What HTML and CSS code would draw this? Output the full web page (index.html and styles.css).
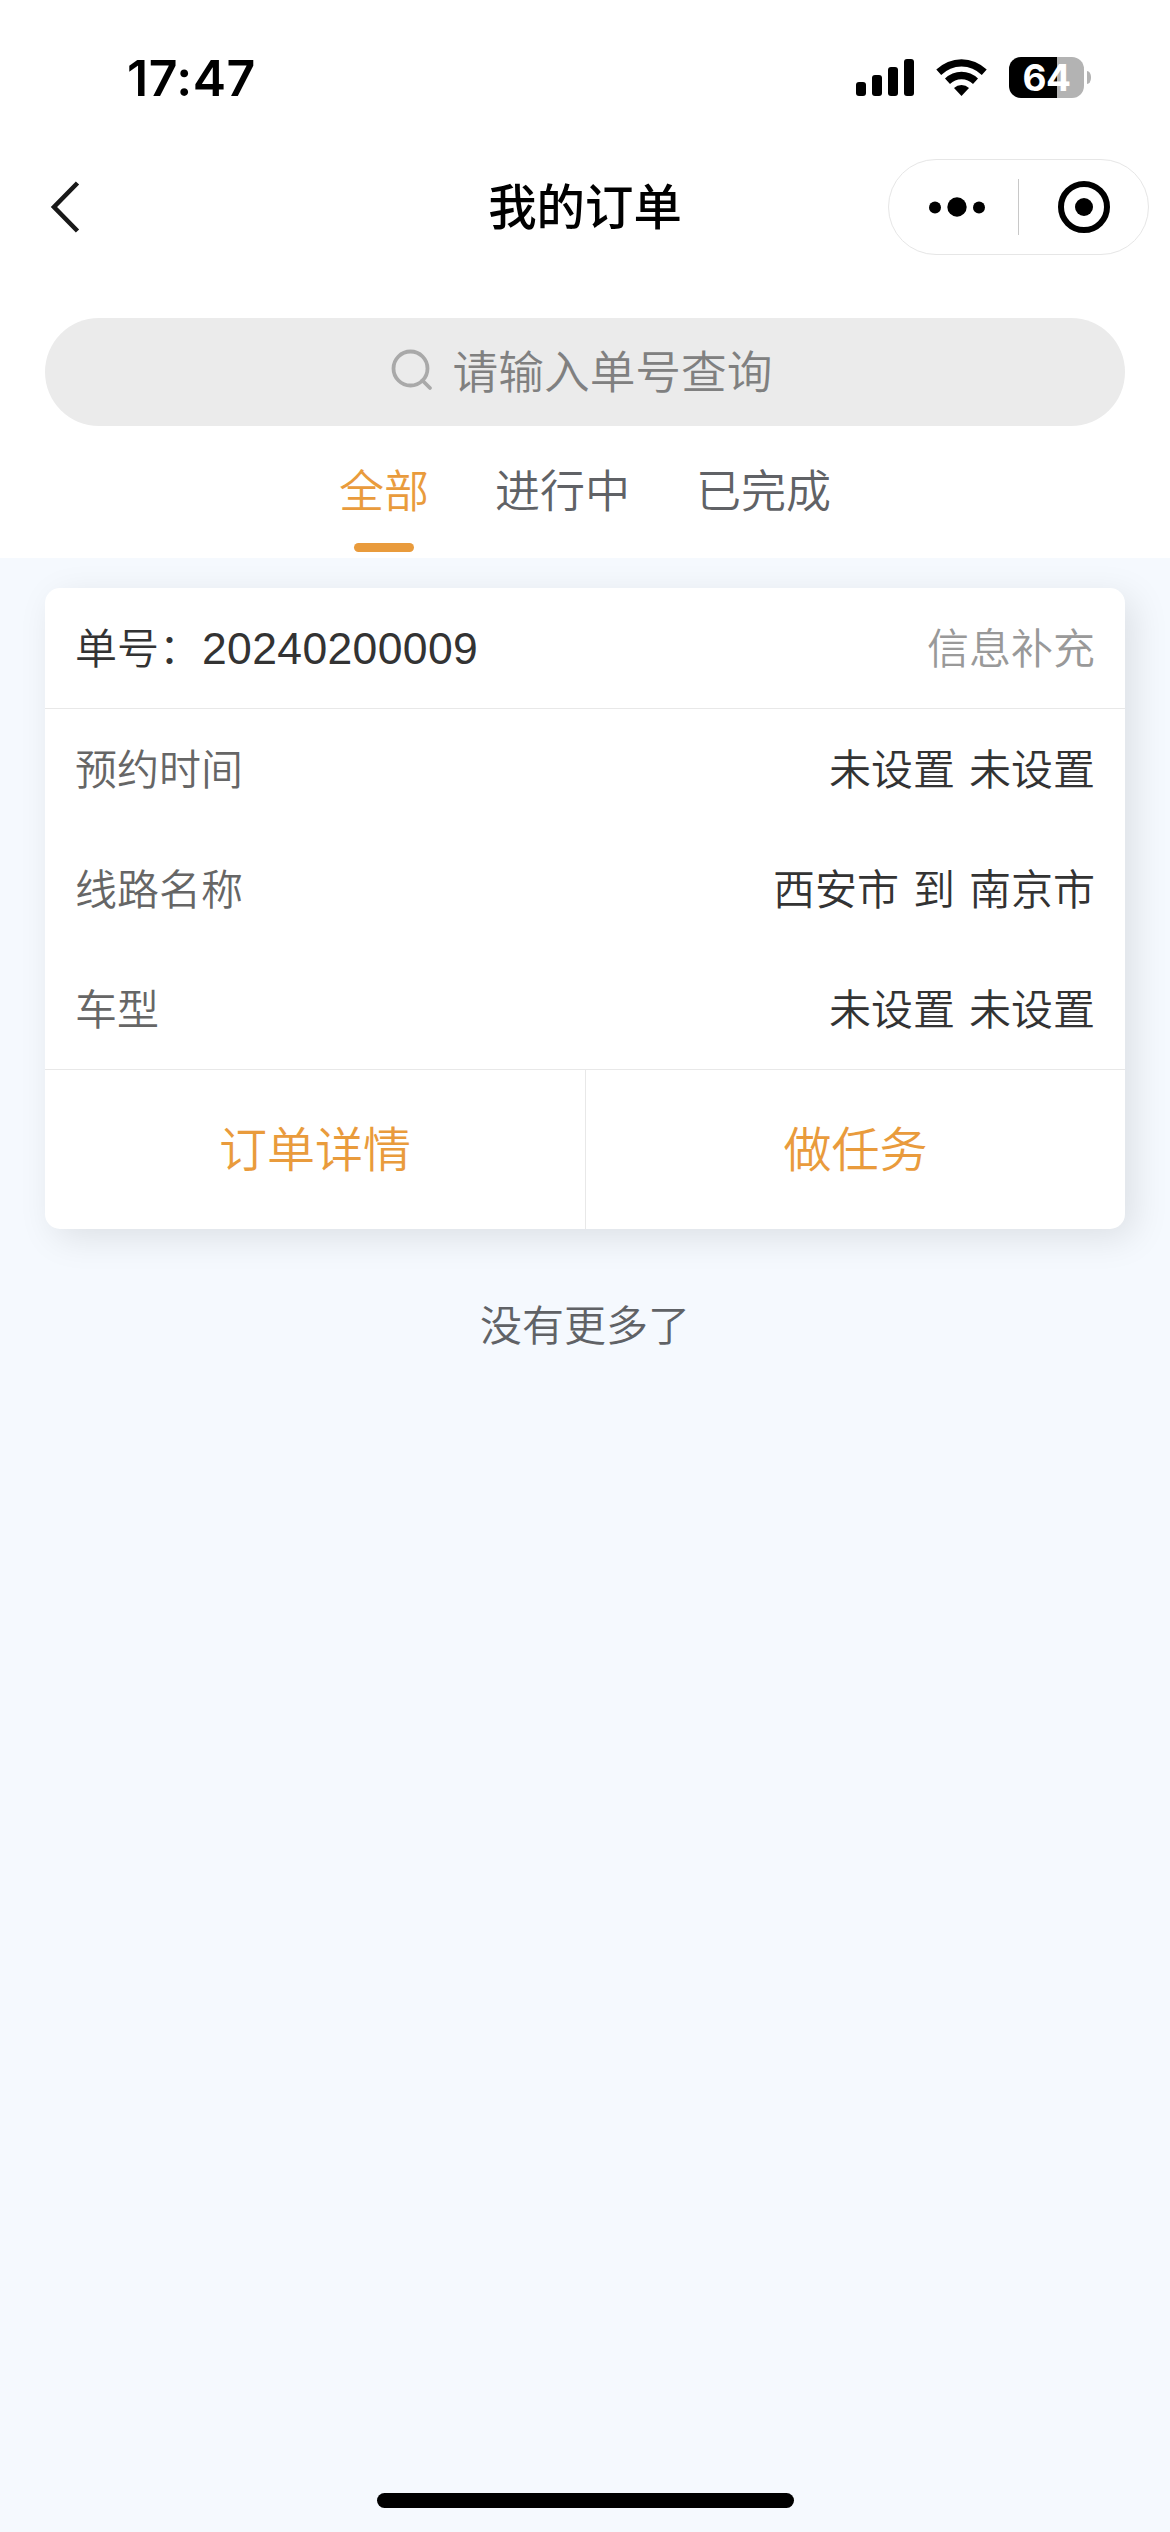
FILE: index.html
```html
<!DOCTYPE html>
<html lang="zh-CN">
<head>
<meta charset="utf-8">
<title>我的订单</title>
<link rel="stylesheet" href="styles.css">
</head>
<body>
<div class="screen">
  <header class="status-bar">
    <time class="clock">17:47</time>
    <div class="indicators">
      <svg class="signal" width="58" height="37" viewBox="0 0 58 37">
        <rect x="0" y="23" width="10" height="14" rx="3"/>
        <rect x="16" y="16" width="10" height="21" rx="3"/>
        <rect x="32" y="8" width="10" height="29" rx="3"/>
        <rect x="48" y="0" width="10" height="37" rx="3"/>
      </svg>
      <svg class="wifi" width="51" height="37" viewBox="0 0 51 37">
        <path d="M0.3 10.6a35.7 35.7 0 0 1 50.4 0l-4.9 5.4a28.6 28.6 0 0 0-40.6 0z"/>
        <path d="M9 19.6a23.4 23.4 0 0 1 33 0l-5 5.4a16.3 16.3 0 0 0-23 0z"/>
        <path d="M18 29a10.8 10.8 0 0 1 15 0L25.500 37z"/>
      </svg>
      <div class="battery">
        <div class="battery-body">64</div>
        <div class="battery-nub"></div>
      </div>
    </div>
  </header>

  <nav class="nav-bar">
    <svg class="back" width="32" height="56" viewBox="0 0 32 56">
      <path d="M27.500 4L4 28L27.500 52"/>
    </svg>
    <h1 class="title">我的订单</h1>
    <div class="capsule">
      <svg class="more" width="56" height="20" viewBox="0 0 56 20">
        <circle cx="6" cy="10.500" r="6"/><circle cx="28" cy="10" r="9.700"/><circle cx="50" cy="10.500" r="6"/>
      </svg>
      <i class="capsule-line"></i>
      <svg class="close" width="52" height="52" viewBox="0 0 52 52">
        <circle class="ring" cx="26" cy="26" r="23"/><circle cx="26" cy="26" r="9"/>
      </svg>
    </div>
  </nav>

  <div class="search">
    <svg class="search-icon" width="40" height="42" viewBox="0 0 40 42">
      <circle cx="18.500" cy="17.500" r="17"/><path d="M30.500 29.500L38 37"/>
    </svg>
    <span class="placeholder">请输入单号查询</span>
  </div>

  <div class="tabs">
    <div class="tab active">全部</div>
    <div class="tab">进行中</div>
    <div class="tab">已完成</div>
  </div>

  <main class="list">
    <article class="card">
      <div class="row head"><span>单号：<span class="number">20240200009</span></span><span class="state">信息补充</span></div>
      <div class="row"><span class="label">预约时间</span><span class="value">未设置 未设置</span></div>
      <div class="row"><span class="label">线路名称</span><span class="value">西安市 到 南京市</span></div>
      <div class="row"><span class="label">车型</span><span class="value">未设置 未设置</span></div>
      <div class="actions"><div class="action">订单详情</div><div class="action">做任务</div></div>
    </article>
    <p class="end">没有更多了</p>
    <div class="home-indicator"></div>
  </main>
</div>
</body>
</html>
```
FILE: styles.css
```css
* { box-sizing: border-box; }

body {
  margin: 0;
  background: #fff;
  color: #333;
  font-family: Inter, "Noto Sans CJK SC", sans-serif;
  font-size: 42px;
  font-weight: 350;
}

svg { display: block; flex: none; overflow: visible; }

.screen {
  width: 1170px;
  height: 2532px;
  display: flex;
  flex-direction: column;
  overflow: hidden;
}

/* status bar */
.status-bar {
  height: 156px;
  padding: 0 79px 0 127px;
  display: flex;
  justify-content: space-between;
  color: #000;
}

.clock {
  margin-top: 48px;
  font-size: 50px;
  line-height: 60px;
  font-weight: 600;
  letter-spacing: 0.5px;
}

.indicators {
  height: 41px;
  margin-top: 57px;
  display: flex;
  align-items: center;
}

.wifi { margin: 0 22px; }

.battery {
  display: flex;
  align-items: center;
  gap: 3px;
}

.battery-body {
  width: 75px;
  height: 41px;
  border-radius: 12px;
  background: linear-gradient(90deg, #000 48px, #b3b3b3 48px);
  color: #fff;
  font-size: 37px;
  line-height: 41px;
  font-weight: 700;
  letter-spacing: -0.5px;
  text-align: center;
}

.battery-nub {
  width: 4px;
  height: 13px;
  border-radius: 0 4px 4px 0 / 0 6px 6px 0;
  background: #b3b3b3;
}

/* navigation */
.nav-bar {
  height: 102px;
  padding: 0 21px 0 50px;
  display: grid;
  grid-template-columns: 261px 1fr 261px;
  align-items: center;
  color: #000;
}

.back {
  fill: none;
  stroke: #191919;
  stroke-width: 4.6;
}

.title {
  margin: 0 0 0 -29px;
  padding-top: 2px;
  font-size: 48.4px;
  line-height: 60px;
  font-weight: 500;
  text-align: center;
}

.capsule {
  width: 261px;
  height: 96px;
  padding: 0 38px 0 40px;
  border: 1px solid #e6e6e6;
  border-radius: 48px;
  display: flex;
  align-items: center;
  justify-content: space-between;
}

.capsule-line {
  width: 1px;
  height: 56px;
  margin-left: -6px;
  background: #c8c8c8;
}

.ring {
  fill: none;
  stroke: #000;
  stroke-width: 6;
}

/* search */
.search {
  height: 108px;
  margin: 60px 45px 0;
  padding-right: 6px;
  border-radius: 54px;
  background: #ebebeb;
  color: #808080;
  display: flex;
  align-items: center;
  justify-content: center;
  gap: 21px;
  font-size: 45.7px;
  line-height: 60px;
}

.placeholder { padding-top: 2px; }

.search-icon {
  fill: none;
  stroke: #a9a9a9;
  stroke-width: 3.8;
  stroke-linecap: round;
}

/* tabs */
.tabs {
  height: 132px;
  display: flex;
  justify-content: center;
  gap: 66px;
  color: #606266;
  font-size: 45px;
  line-height: 60px;
}

.tab {
  padding-top: 36px;
  display: flex;
  flex-direction: column;
  align-items: center;
}

.active { color: #e99b3c; }

.active::after {
  content: "";
  width: 60px;
  height: 9px;
  margin-top: 21px;
  border-radius: 5px;
  background: #e99b3c;
}

/* orders */
.list {
  flex: 1;
  padding: 30px 45px 24px;
  background: #f5f9fe;
  display: flex;
  flex-direction: column;
}

.card {
  border-radius: 15px;
  background: #fff;
  box-shadow: 9px 9px 36px rgba(0, 0, 0, 0.1);
}

.row {
  height: 120px;
  padding: 2px 30px 0;
  display: flex;
  align-items: center;
  justify-content: space-between;
  line-height: 60px;
}

.head {
  height: 121px;
  padding-top: 1px;
  border-bottom: 1px solid #e8e8e8;
}

.number {
  margin-left: 1px;
  font-family: "Liberation Sans", Arial, sans-serif;
  font-size: 44.500px;
  letter-spacing: 0.35px;
  line-height: 1;
}

.state { color: #999; }
.label { color: #666; }
.value { word-spacing: 2.2px; }

.actions {
  height: 160px;
  border-top: 1px solid #e8e8e8;
  display: grid;
  grid-template-columns: 1fr 1fr;
  color: #e99b3c;
  font-size: 48px;
  line-height: 159px;
  text-align: center;
}

.action + .action { border-left: 1px solid #e8e8e8; }

.end {
  margin: 67px 0 0;
  color: #606266;
  line-height: 60px;
  text-align: center;
}

.home-indicator {
  width: 417px;
  height: 15px;
  margin: auto auto 0;
  border-radius: 8px;
  background: #000;
}
```
